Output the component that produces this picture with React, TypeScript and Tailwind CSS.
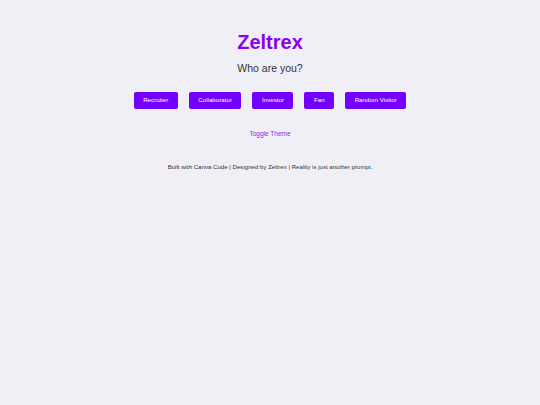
const roles = ['Recruiter', 'Collaborator', 'Investor', 'Fan', 'Random Visitor'];

export default function App() {
  return (
    <div
      className="min-h-screen bg-[#f0eff5] text-[#333333] flex flex-col items-center"
      style={{ fontFamily: '"Liberation Sans", Arial, sans-serif' }}
    >
      {/* 헤더 */}
      <h1 className="mt-[29px] text-[20px] leading-[26px] font-bold text-[#8a00f0]">Zeltrex</h1>
      <p className="mt-[6px] text-[10.5px] leading-[14px] text-[#333333]">Who are you?</p>

      {/* 역할 버튼 */}
      <div className="mt-[17px] flex gap-[11px]">
        {roles.map((role) => (
          <button
            key={role}
            className="h-[17px] px-[9.5px] rounded-[2px] bg-[#7300ff] text-white text-[6.2px] leading-none"
          >
            {role}
          </button>
        ))}
      </div>

      <button className="mt-[20px] text-[6.5px] leading-[9px] text-[#8a2be2]">Toggle Theme</button>

      <footer className="mt-[24px] text-[6.1px] leading-[9px] text-[#333333]">
        Built with Canva Code | Designed by Zeltrex | Reality is just another prompt.
      </footer>
    </div>
  );
}
